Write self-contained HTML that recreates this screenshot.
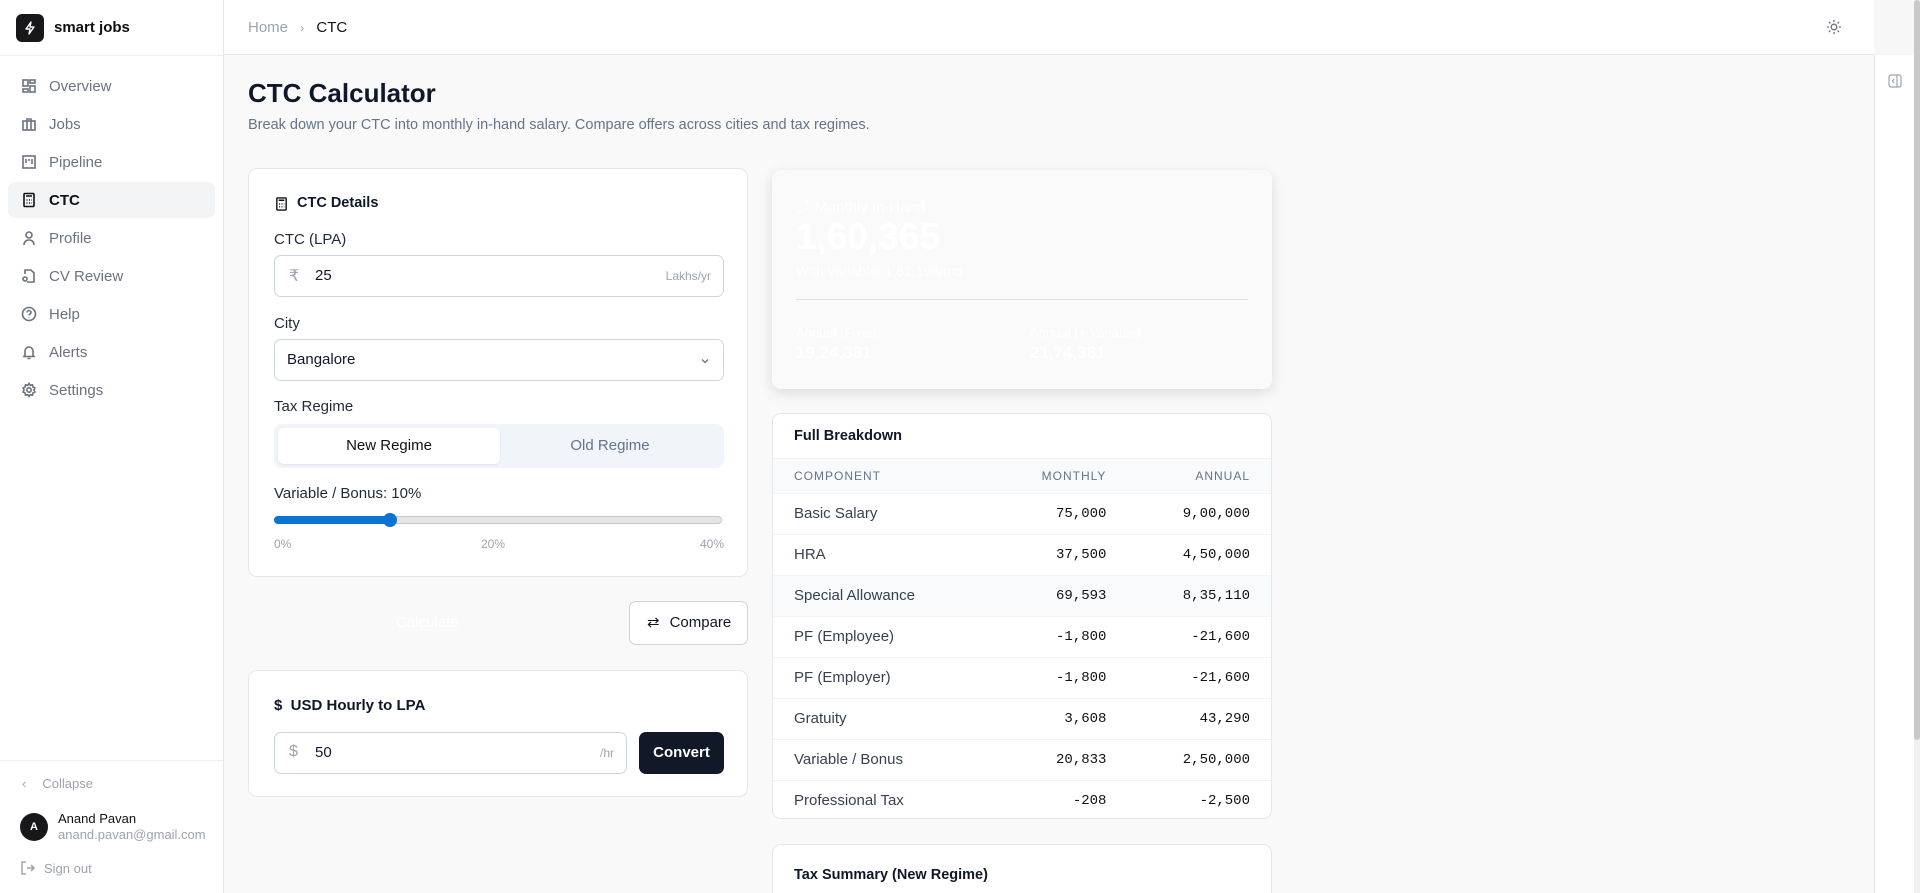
<!DOCTYPE html>
<html style="overflow:hidden;height:893px"><head><meta charset="utf-8"><style>
*{box-sizing:border-box;margin:0;padding:0}
html,body{overflow:hidden}
body{width:1920px;height:893px;background:#f9f9f9;font-family:"Liberation Sans",sans-serif;color:#0f172a;position:relative}
.abs{position:absolute}
.side{left:0;top:0;width:224px;height:893px;background:#fff;border-right:1px solid #e5e7eb}
.nav{position:absolute;left:8px;width:207px;height:36px;display:flex;align-items:center;padding-left:13px;font-size:15px;color:#6b7280;border-radius:7px}
.nav svg{width:16px;height:16px;margin-right:12px;stroke:#6b7280;fill:none;stroke-width:1.6}
.nav.act{background:#f3f4f6;color:#111}
.nav.act svg{stroke:#111}
.card{background:#fff;border:1px solid #e5e7eb;border-radius:9px;position:absolute}
.lbl{position:absolute;font-size:15px;color:#1f2937}
.inp{position:absolute;border:1px solid #cbd5e1;border-radius:7px;background:#fff}
table{border-collapse:collapse;width:100%}
td,th{height:41px;font-size:15px;padding:0 21px;border-bottom:1px solid #f1f3f5}
th{font-size:12px;letter-spacing:1px;color:#64748b;font-weight:normal;background:#f8fafc;height:34px}
td.n{text-align:right;font-family:"Liberation Mono",monospace;color:#111;font-size:14px}
td.c{color:#374151}
</style></head><body>
<div class="abs side">
 <div class="abs" style="left:16px;top:14px;width:28px;height:28px;background:#18181b;border-radius:6px"><svg width="28" height="28" viewBox="0 0 28 28"><path d="M15 8l-5 7h4l-1 5 5-7h-4z" fill="none" stroke="#fff" stroke-width="1.4" stroke-linejoin="round"/></svg></div>
 <div class="abs" style="left:54px;top:19px;font-size:15px;font-weight:bold;color:#111">smart jobs</div>
 <div class="abs" style="left:0;top:55px;width:223px;border-top:1px solid #eef0f2"></div>
 <div class="nav" style="top:68px"><svg viewBox="0 0 16 16"><rect x="2" y="2" width="5" height="6"/><rect x="9" y="2" width="5" height="3"/><rect x="9" y="8" width="5" height="6"/><rect x="2" y="11" width="5" height="3"/></svg>Overview</div>
 <div class="nav" style="top:106px"><svg viewBox="0 0 16 16"><rect x="2" y="5" width="12" height="9"/><path d="M6 5V3h4v2M6 5v9M10 5v9"/></svg>Jobs</div>
 <div class="nav" style="top:144px"><svg viewBox="0 0 16 16"><rect x="2" y="2" width="12" height="12"/><path d="M5 5v4M8 5v2M11 5v5"/></svg>Pipeline</div>
 <div class="nav act" style="top:182px"><svg viewBox="0 0 16 16"><rect x="3" y="1.5" width="10" height="13" rx="1"/><path d="M5 4h6M5.5 8h1M8 8h1M10.5 8h.5M5.5 11h1M8 11h1M10.5 11h.5"/></svg><b style="font-weight:600">CTC</b></div>
 <div class="nav" style="top:220px"><svg viewBox="0 0 16 16"><circle cx="8" cy="5" r="3"/><path d="M3 15c0-3 2-5 5-5s5 2 5 5"/></svg>Profile</div>
 <div class="nav" style="top:258px"><svg viewBox="0 0 16 16"><path d="M4 6V2h6l3 3v9H6"/><circle cx="4" cy="11" r="2"/></svg>CV Review</div>
 <div class="nav" style="top:296px"><svg viewBox="0 0 16 16"><circle cx="8" cy="8" r="6.5"/><path d="M6 6.5a2 2 0 114 0c0 1.5-2 1.5-2 3M8 11.5v.5"/></svg>Help</div>
 <div class="nav" style="top:334px"><svg viewBox="0 0 16 16"><path d="M4 11V7a4 4 0 018 0v4l1 1.5H3zM6.5 14.5h3"/></svg>Alerts</div>
 <div class="nav" style="top:372px"><svg viewBox="0 0 16 16"><circle cx="8" cy="8" r="2.2"/><path d="M8 1.5l1.3 1.8 2.2-.5.4 2.2 2 1-1 2 1 2-2 1-.4 2.2-2.2-.5L8 14.5l-1.3-1.8-2.2.5-.4-2.2-2-1 1-2-1-2 2-1 .4-2.2 2.2.5z"/></svg>Settings</div>
 <div class="abs" style="left:0;top:760px;width:223px;border-top:1px solid #eef0f2"></div>
 <div class="abs" style="left:22px;top:776px;font-size:13px;color:#9ca3af"><span style="margin-right:16px">‹</span>Collapse</div>
 <div class="abs" style="left:20px;top:813px;width:28px;height:28px;border-radius:50%;background:#18181b;color:#fff;font-size:11px;font-weight:bold;text-align:center;line-height:28px">A</div>
 <div class="abs" style="left:58px;top:811px;font-size:13px;color:#111">Anand Pavan</div>
 <div class="abs" style="left:58px;top:827px;font-size:13px;color:#9ca3af">anand.pavan@gmail.com</div>
 <div class="abs" style="left:20px;top:860px;font-size:13px;color:#9ca3af"><svg width="16" height="16" viewBox="0 0 16 16" style="vertical-align:-3px;margin-right:8px" fill="none" stroke="#9ca3af" stroke-width="1.5"><path d="M6 2H2v12h4M7 8h7M11 5l3 3-3 3"/></svg>Sign out</div>
</div>
<div class="abs" style="left:224px;top:0;width:1650px;height:55px;background:#fff;border-bottom:1px solid #e5e7eb"></div>
<div class="abs" style="left:248px;top:19px;font-size:15px;color:#9ca3af">Home <span style="margin:0 8px;font-size:12px">›</span> <span style="color:#111">CTC</span></div>
<svg class="abs" style="left:1826px;top:19px" width="16" height="16" viewBox="0 0 16 16" fill="none" stroke="#6b7280" stroke-width="1.3"><circle cx="8" cy="8" r="2.8"/><path d="M8 1v2M8 13v2M1 8h2M13 8h2M3 3l1.4 1.4M11.6 11.6L13 13M3 13l1.4-1.4M11.6 4.4L13 3"/></svg>
<div class="abs" style="left:1874px;top:0;width:40px;height:893px;background:#fff;border-left:1px solid #e5e7eb"></div>
<div class="abs" style="left:1874px;top:0;width:40px;height:55px;background:#f7f7f7"></div>
<svg class="abs" style="left:1888px;top:74px" width="14" height="14" viewBox="0 0 14 14" fill="none" stroke="#9ca3af" stroke-width="1.2"><rect x="1" y="1" width="12" height="12" rx="2"/><path d="M9 1v12M6 5L4.5 7 6 9"/></svg>
<div class="abs" style="left:1914px;top:0;width:6px;height:893px;background:#f1f1f1"></div>
<div class="abs" style="left:1914px;top:0;width:6px;height:740px;background:#c9c9c9;border-radius:3px"></div>

<div class="abs" style="left:248px;top:78px;font-size:26px;font-weight:bold;color:#0f172a">CTC Calculator</div>
<div class="abs" style="left:248px;top:117px;font-size:14.5px;color:#64748b">Break down your CTC into monthly in-hand salary. Compare offers across cities and tax regimes.</div>

<div class="card" style="left:248px;top:168px;width:500px;height:409px">
 <svg class="abs" style="left:25px;top:27px" width="15" height="16" viewBox="0 0 16 16" fill="none" stroke="#111" stroke-width="1.5"><rect x="3" y="1.5" width="10" height="13" rx="1"/><path d="M5 4h6M5.5 8h1M8 8h1M10.5 8h.5M5.5 11h1M8 11h1M10.5 11h.5"/></svg>
 <div class="abs" style="left:48px;top:26px;font-size:14.5px;font-weight:bold">CTC Details</div>
 <div class="lbl" style="left:25px;top:62px">CTC (LPA)</div>
 <div class="inp" style="left:25px;top:86px;width:450px;height:42px"><span class="abs" style="left:14px;top:10px;color:#9ca3af;font-size:16px">₹</span><span class="abs" style="left:40px;top:11px;font-size:15px">25</span><span class="abs" style="right:12px;top:13px;font-size:12px;color:#9ca3af">Lakhs/yr</span></div>
 <div class="lbl" style="left:25px;top:146px">City</div>
 <div class="inp" style="left:25px;top:170px;width:450px;height:42px"><span class="abs" style="left:12px;top:11px;font-size:15px">Bangalore</span><svg class="abs" style="right:12px;top:15px" width="12" height="12" viewBox="0 0 12 12" fill="none" stroke="#6b7280" stroke-width="1.3"><path d="M3 4.5l3 3 3-3"/></svg></div>
 <div class="lbl" style="left:25px;top:229px">Tax Regime</div>
 <div class="abs" style="left:25px;top:255px;width:450px;height:44px;background:#f1f5f9;border-radius:8px">
  <div class="abs" style="left:4px;top:4px;width:222px;height:36px;background:#fff;border-radius:6px;box-shadow:0 1px 2px rgba(0,0,0,.08);text-align:center;line-height:36px;font-size:15px;color:#111">New Regime</div>
  <div class="abs" style="left:226px;top:4px;width:220px;height:36px;text-align:center;line-height:36px;font-size:15px;color:#64748b">Old Regime</div>
 </div>
 <div class="lbl" style="left:25px;top:316px">Variable / Bonus: 10%</div>
 <div class="abs" style="left:25px;top:347px;width:448px;height:8px;border-radius:4px;background:#e5e5e5;border:1px solid #c7c7c7"></div>
 <div class="abs" style="left:25px;top:347px;width:118px;height:8px;border-radius:4px;background:#0b74d1"></div>
 <div class="abs" style="left:134px;top:344px;width:14px;height:14px;border-radius:50%;background:#0b74d1"></div>
 <div class="abs" style="left:25px;top:368px;font-size:12px;color:#9ca3af;width:450px"><span>0%</span><span class="abs" style="left:207px">20%</span><span class="abs" style="right:0">40%</span></div>
</div>
<div class="abs" style="left:396px;top:614px;font-size:15px;color:#fff">Calculate</div>
<div class="abs" style="left:629px;top:601px;width:119px;height:44px;border:1px solid #cbd5e1;border-radius:7px;background:#fff;font-size:15px;line-height:42px;padding-left:17px"><span style="margin-right:10px">⇄</span>Compare</div>

<div class="card" style="left:248px;top:670px;width:500px;height:127px">
 <div class="abs" style="left:25px;top:26px;font-size:15px;font-weight:bold">$ &nbsp;USD Hourly to LPA</div>
 <div class="inp" style="left:25px;top:61px;width:353px;height:42px"><span class="abs" style="left:14px;top:10px;color:#9ca3af;font-size:16px">$</span><span class="abs" style="left:40px;top:11px;font-size:15px">50</span><span class="abs" style="right:12px;top:13px;font-size:12px;color:#9ca3af">/hr</span></div>
 <div class="abs" style="left:390px;top:61px;width:85px;height:42px;background:#111827;border-radius:7px;color:#fff;font-size:15px;font-weight:bold;text-align:center;line-height:42px">Convert</div>
</div>

<div class="abs" style="left:772px;top:170px;width:500px;height:219px;background:#fafafa;border-radius:9px;box-shadow:0 4px 14px rgba(0,0,0,.12);color:#fff">
 <div class="abs" style="left:24px;top:26px;font-size:15px">⤴ Monthly In-Hand</div>
 <div class="abs" style="left:24px;top:46px;font-size:37px;font-weight:bold">1,60,365</div>
 <div class="abs" style="left:24px;top:93px;font-size:14px">With variable: 1,81,198/mo</div>
 <div class="abs" style="left:24px;top:129px;width:452px;border-top:1px solid #ddd"></div>
 <div class="abs" style="left:24px;top:155px;font-size:13px">Annual (Fixed)</div>
 <div class="abs" style="left:24px;top:173px;font-size:17px;font-weight:bold">19,24,381</div>
 <div class="abs" style="left:258px;top:155px;font-size:13px">Annual (+ Variable)</div>
 <div class="abs" style="left:258px;top:173px;font-size:17px;font-weight:bold">21,74,381</div>
</div>

<div class="card" style="left:772px;top:413px;width:500px;height:406px;overflow:hidden">
 <div style="height:45px;padding:14px 0 0 21px;font-size:14.5px;font-weight:bold;border-bottom:1px solid #eef0f2">Full Breakdown</div>
 <table>
  <tr><th style="text-align:left">COMPONENT</th><th style="text-align:right">MONTHLY</th><th style="text-align:right">ANNUAL</th></tr>
  <tr><td class="c">Basic Salary</td><td class="n">75,000</td><td class="n">9,00,000</td></tr>
  <tr><td class="c">HRA</td><td class="n">37,500</td><td class="n">4,50,000</td></tr>
  <tr style="background:#f8fafc"><td class="c">Special Allowance</td><td class="n">69,593</td><td class="n">8,35,110</td></tr>
  <tr><td class="c">PF (Employee)</td><td class="n">-1,800</td><td class="n">-21,600</td></tr>
  <tr><td class="c">PF (Employer)</td><td class="n">-1,800</td><td class="n">-21,600</td></tr>
  <tr><td class="c">Gratuity</td><td class="n">3,608</td><td class="n">43,290</td></tr>
  <tr><td class="c">Variable / Bonus</td><td class="n">20,833</td><td class="n">2,50,000</td></tr>
  <tr><td class="c" style="border:0">Professional Tax</td><td class="n" style="border:0">-208</td><td class="n" style="border:0">-2,500</td></tr>
 </table>
</div>
<div class="card" style="left:772px;top:844px;width:500px;height:49px;border-bottom:0;border-radius:9px 9px 0 0">
 <div class="abs" style="left:21px;top:22px;font-size:14.5px;font-weight:bold">Tax Summary (New Regime)</div>
</div>
</body></html>
